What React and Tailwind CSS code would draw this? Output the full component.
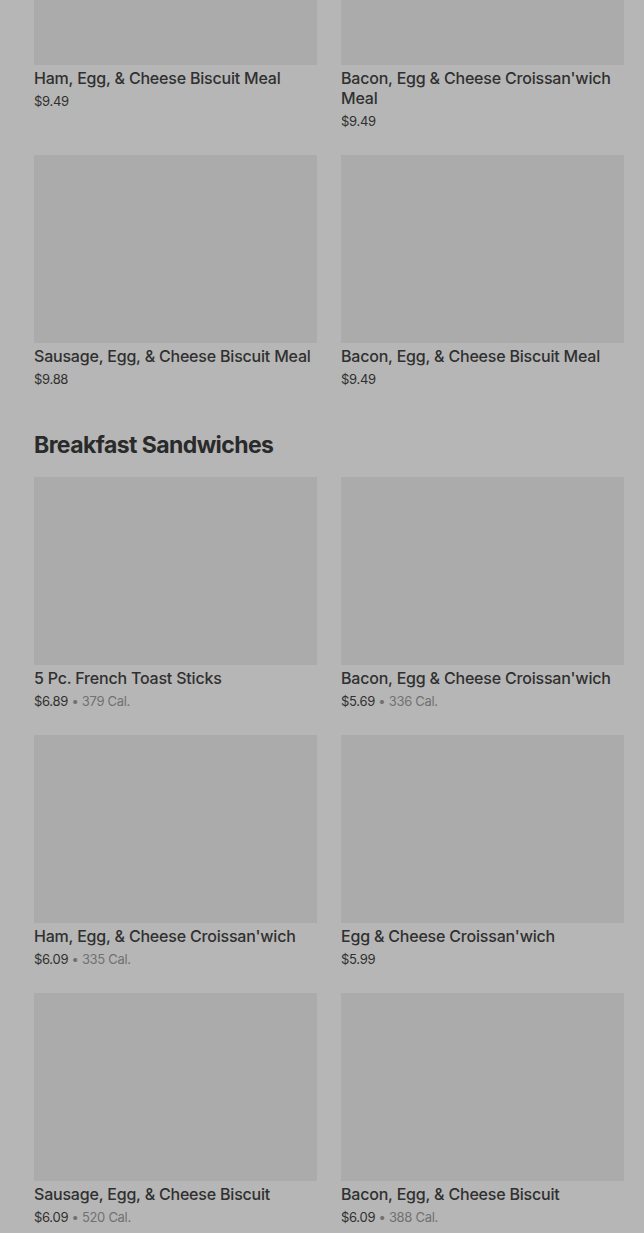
const mealItems = [
  { name: 'Ham, Egg, & Cheese Biscuit Meal', price: '$9.49' },
  { name: "Bacon, Egg & Cheese Croissan'wich Meal", price: '$9.49' },
  { name: 'Sausage, Egg, & Cheese Biscuit Meal', price: '$9.88' },
  { name: 'Bacon, Egg, & Cheese Biscuit Meal', price: '$9.49' },
];

const sandwiches = [
  { name: '5 Pc. French Toast Sticks', price: '$6.89', cal: '379 Cal.' },
  { name: "Bacon, Egg & Cheese Croissan'wich", price: '$5.69', cal: '336 Cal.' },
  { name: "Ham, Egg, & Cheese Croissan'wich", price: '$6.09', cal: '335 Cal.' },
  { name: "Egg & Cheese Croissan'wich", price: '$5.99' },
  { name: 'Sausage, Egg, & Cheese Biscuit', price: '$6.09', cal: '520 Cal.' },
  { name: 'Bacon, Egg, & Cheese Biscuit', price: '$6.09', cal: '388 Cal.' },
];

const ItemCard = ({ item }) => (
  <div className="flex flex-col">
    <div className="h-[188px] w-full bg-[#ababab]" />
    <div className="mt-[3px] text-[16px] leading-5 font-medium tracking-[-0.2px] text-[#303030]">{item.name}</div>
    <div className="mt-[3px] text-[13px] leading-5 tracking-[-0.3px] text-[#303030]">
      {item.price}
      {item.cal && (
        <span className="text-[#717171]"> • {item.cal}</span>
      )}
    </div>
  </div>
);

const App = () => {
  return (
    <div
      className="min-h-screen bg-[#b6b6b6] pl-[34px] pr-[20px] overflow-hidden"
      style={{ fontFamily: 'Inter, Roboto, sans-serif' }}
    >
      {/* first section is scrolled partly out of view */}
      <div className="-mt-[123px] grid grid-cols-2 gap-x-6 gap-y-6">
        {mealItems.map((item) => (
          <ItemCard key={item.name} item={item} />
        ))}
      </div>

      <div className="pt-[40px]">
        <h2 className="text-[23px] leading-8 font-bold tracking-tight text-[#2a2a2a] mb-[16px]">
          Breakfast Sandwiches
        </h2>
        <div className="grid grid-cols-2 gap-x-6 gap-y-6 pb-6">
          {sandwiches.map((item) => (
            <ItemCard key={item.name} item={item} />
          ))}
        </div>
      </div>
    </div>
  );
};

export default App;
